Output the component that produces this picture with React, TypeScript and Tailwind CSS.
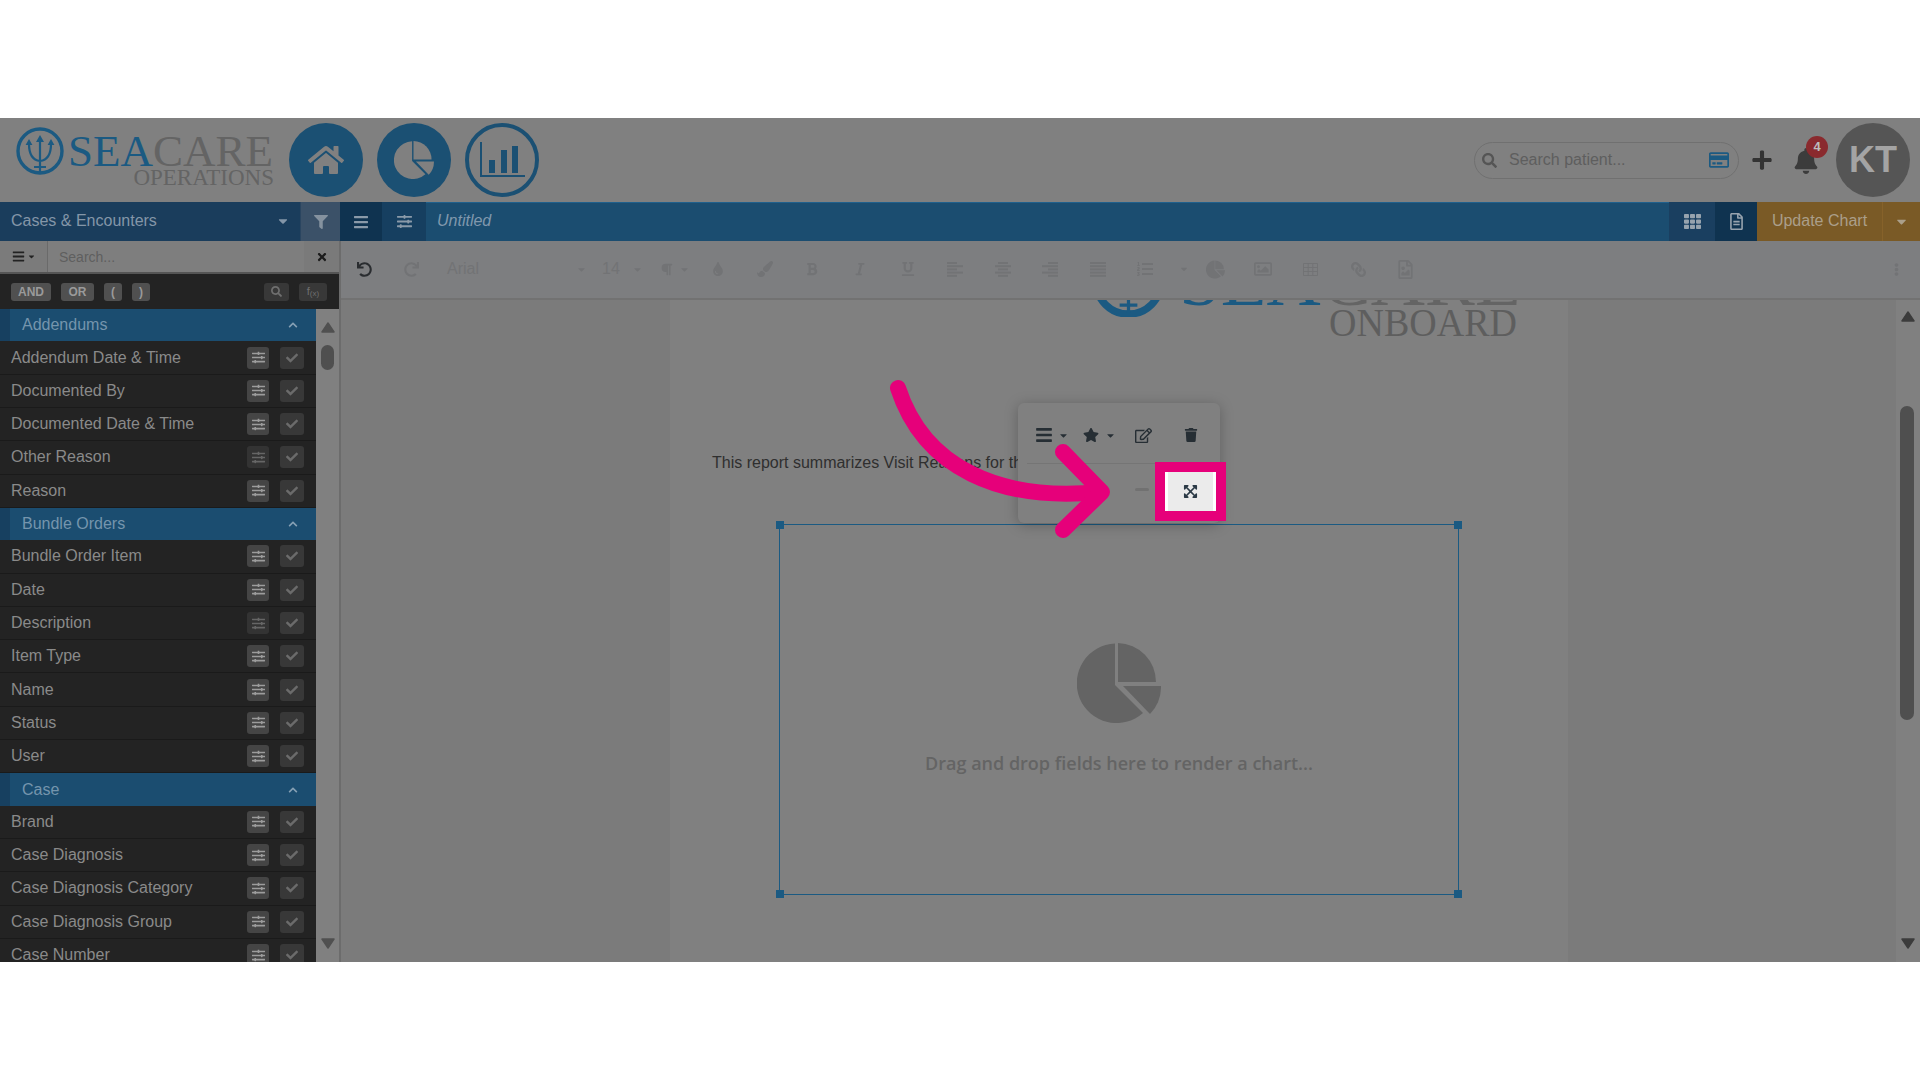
import type { ReactNode } from 'react'
import {
  FaBars,
  FaBell,
  FaBold,
  FaCaretDown,
  FaCheck,
  FaChevronUp,
  FaEllipsisV,
  FaExpandArrowsAlt,
  FaFilter,
  FaHome,
  FaItalic,
  FaLink,
  FaListOl,
  FaPaintBrush,
  FaParagraph,
  FaPlus,
  FaRedo,
  FaRegCreditCard,
  FaRegEdit,
  FaRegFileAlt,
  FaRegFileImage,
  FaRegImage,
  FaSearch,
  FaSlidersH,
  FaStar,
  FaTh,
  FaTimes,
  FaTint,
  FaTrash,
  FaUnderline,
  FaUndo,
} from 'react-icons/fa'

const sections = [
  {
    title: 'Addendums',
    rows: ['Addendum Date & Time', 'Documented By', 'Documented Date & Time', 'Other Reason', 'Reason'],
  },
  {
    title: 'Bundle Orders',
    rows: ['Bundle Order Item', 'Date', 'Description', 'Item Type', 'Name', 'Status', 'User'],
  },
  {
    title: 'Case',
    rows: ['Brand', 'Case Diagnosis', 'Case Diagnosis Category', 'Case Diagnosis Group', 'Case Number'],
  },
]

function Trident({ className, ring = 3.4 }: { className?: string; ring?: number }) {
  return (
    <svg viewBox="0 0 48 48" className={className} fill="none" stroke="#1b5a82">
      <circle cx="24" cy="24" r="22" strokeWidth={ring} />
      <path d="M24 12V45M13 17c0 10 3 16 11 17M35 17c0 10-3 16-11 17M18 40h12" strokeWidth="2.2" />
      <path d="M24 8l-4 7h8zM13 12l-3.4 6h6.8zM35 12l-3.4 6h6.8z" fill="#1b5a82" strokeWidth="0" />
    </svg>
  )
}

function PieShape({ className }: { className?: string }) {
  return (
    <svg viewBox="0 0 84 80" className={className} fill="currentColor">
      <path d="M38 0.5V42L66 70A39.8 39.8 0 1 1 38 0.5z" />
      <path d="M41 0a39 39 0 0 1 38 39H41z" />
      <path d="M46 43h38a39 39 0 0 1-11 28z" />
    </svg>
  )
}

function AlignIcon({ type }: { type: 'left' | 'center' | 'right' | 'justify' }) {
  const short = 10
  const x = type === 'left' || type === 'justify' ? 0 : type === 'center' ? 3 : 6
  const w = type === 'justify' ? 16 : short
  return (
    <svg viewBox="0 0 16 15" className="w-[16px] h-[15px]" fill="currentColor">
      <rect x={x} y="0" width={w} height="2" />
      <rect x="0" y="3.2" width="16" height="2" />
      <rect x={x} y="6.4" width={w} height="2" />
      <rect x="0" y="9.6" width="16" height="2" />
      <rect x={x} y="12.8" width={w} height="2" />
    </svg>
  )
}

function ScrollArrow({ down, className }: { down?: boolean; className: string }) {
  return (
    <svg viewBox="0 0 14 11" className={`w-[14px] h-[11px] shrink-0 ${className}`} fill="currentColor">
      <path
        d={down ? 'M1 1h12L7 10z' : 'M7 1l6 9H1z'}
        stroke="currentColor"
        strokeWidth="1.5"
        strokeLinejoin="round"
      />
    </svg>
  )
}

function Logo() {
  return (
    <div className="flex ml-4 w-[262px] shrink-0 self-start">
      <Trident className="w-12 h-12 mt-[9px] shrink-0" />
      <div className="ml-1 font-['Liberation_Serif',serif] text-[#646464] leading-none w-[206px]">
        <div className="text-[45px] mt-[11px] whitespace-nowrap">
          <span className="text-[#1b5a82]">SEA</span>CARE
        </div>
        <div className="text-[23px] text-right -mt-[8px] whitespace-nowrap">OPERATIONS</div>
      </div>
    </div>
  )
}

function Header() {
  return (
    <header className="h-[84px] shrink-0 bg-[#808080] flex items-center">
      <Logo />
      <div className="flex items-center ml-[11px] gap-[14px]">
        <div className="w-[74px] h-[74px] rounded-full bg-[#1b5073] flex items-center justify-center">
          <FaHome className="text-[#808080] text-[36px]" />
        </div>
        <div className="w-[74px] h-[74px] rounded-full bg-[#1b5073] flex items-center justify-center text-[#808080]">
          <PieShape className="w-[40px] h-[38px]" />
        </div>
        <div className="w-[74px] h-[74px] rounded-full border-[4px] border-[#1b5073] flex items-center justify-center">
          <svg viewBox="0 0 45 36" className="w-[45px] h-[36px] text-[#1b5073]" fill="currentColor">
            <path d="M2 0v33h43v2H0V0z" />
            <rect x="9" y="18" width="6" height="13" />
            <rect x="21" y="8" width="6" height="23" />
            <rect x="32" y="4" width="6" height="27" />
          </svg>
        </div>
      </div>

      <div className="ml-auto flex items-center">
        <div className="w-[265px] h-[37px] rounded-full border border-[#707070] flex items-center pl-[7px] pr-[9px]">
          <FaSearch className="text-[#555] text-[15px]" />
          <span className="ml-[12px] text-[16px] text-[#5e5e5e]">Search patient...</span>
          <FaRegCreditCard className="ml-auto text-[#1b5a82] text-[20px]" />
        </div>
        <FaPlus className="ml-[12px] text-[#333] text-[22px]" />
        <div className="relative ml-[20px] mr-[17px] mt-[1px]">
          <FaBell className="text-[#3c3c3c] text-[26px]" />
          <span className="absolute -top-[12px] left-[13px] w-[22px] h-[22px] rounded-full bg-[#8a2a2e] text-[#bdbdbd] text-[13px] font-bold flex items-center justify-center">
            4
          </span>
        </div>
        <div className="w-[74px] h-[74px] rounded-full bg-[#555555] text-[#a4a4a4] text-[36px] font-bold flex items-center justify-center mr-[10px]">
          KT
        </div>
      </div>
    </header>
  )
}

function BlueBar() {
  return (
    <div className="h-[39px] shrink-0 bg-[#1b4d70] shadow-[inset_0_1px_0_#20608c] flex items-stretch text-[16px]">
      <div className="w-[300px] bg-[#1a3d5c] flex items-center pl-[11px] pr-[10px] pb-[1px] text-[#8496a8]">
        <span>Cases &amp; Encounters</span>
        <FaCaretDown className="ml-auto text-[#8496a8] text-[14px]" />
      </div>
      <div className="w-[40px] bg-[#3b5168] flex items-center justify-center border-l border-[#2a4560]">
        <FaFilter className="text-[#85929f] text-[14px]" />
      </div>
      <div className="w-[42px] bg-[#0f3350] flex items-center justify-center">
        <FaBars className="text-[#8a9aa9] text-[16px]" />
      </div>
      <div className="w-[44px] bg-[#163f60] flex items-center justify-center">
        <FaSlidersH className="text-[#8a9aa9] text-[15px]" />
      </div>
      <div className="flex items-center ml-[11px] pb-[1px] italic text-[#8098ad]">Untitled</div>
      <div className="ml-auto w-[46px] bg-[#1a3f60] flex items-center justify-center">
        <FaTh className="text-[#97a3ae] text-[17px]" />
      </div>
      <div className="w-[42px] bg-[#0f3350] flex items-center justify-center">
        <FaRegFileAlt className="text-[#97a3ae] text-[17px]" />
      </div>
      <div className="w-[125px] bg-[#7a5a26] flex items-center justify-center pb-[1px] text-[#ab9f8a]">Update Chart</div>
      <div className="w-[38px] bg-[#7a5a26] border-l border-[#86622a] flex items-center justify-center">
        <FaCaretDown className="text-[#ab9f8a] text-[15px]" />
      </div>
    </div>
  )
}

function Pill({ children, className }: { children: ReactNode; className: string }) {
  return (
    <div className={`h-[18px] rounded-[3px] bg-[#505050] text-[#9a9a9a] text-[12px] font-bold flex items-center justify-center ${className}`}>
      {children}
    </div>
  )
}

function Row({ label, faint }: { label: string; faint?: boolean }) {
  return (
    <div className="h-[33.3px] shrink-0 bg-[#232323] border-b border-[#1a1a1a] flex items-center pl-[11px] text-[16px] text-[#8a8a8a]">
      <span>{label}</span>
      <div className={`ml-auto w-[22px] h-[22px] rounded-[3px] flex items-center justify-center ${faint ? 'bg-[#333333]' : 'bg-[#454545]'}`}>
        <FaSlidersH className={`text-[13px] ${faint ? 'text-[#666]' : 'text-[#9c9c9c]'}`} />
      </div>
      <div className="ml-[11px] mr-[12px] w-[24px] h-[22px] rounded-[3px] bg-[#383838] flex items-center justify-center">
        <FaCheck className="text-[#6b6b6b] text-[12px]" />
      </div>
    </div>
  )
}

function Sidebar() {
  return (
    <aside className="w-[341px] shrink-0 flex flex-col border-r-2 border-[#6c6c6c] min-h-0">
      <div className="h-[33px] shrink-0 bg-[#7e7e7e] border-b-2 border-[#555] flex items-stretch">
        <div className="w-[48px] border-r border-[#6a6a6a] bg-[#7b7b7b] flex items-center justify-center gap-[2px] text-[#222]">
          <FaBars className="text-[13px]" />
          <FaCaretDown className="text-[9px]" />
        </div>
        <div className="flex-1 flex items-center pl-[11px] pt-[1px] text-[14px] text-[#5f5f5f]">Search...</div>
        <div className="w-[35px] bg-[#7a7a7a] flex items-center justify-center">
          <FaTimes className="text-[#1c1c1c] text-[12px]" />
        </div>
      </div>
      <div className="h-[35px] shrink-0 bg-[#232323] flex items-center pl-[11px]">
        <Pill className="w-[40px]">AND</Pill>
        <Pill className="w-[33px] ml-[10px]">OR</Pill>
        <Pill className="w-[18px] ml-[10px]">(</Pill>
        <Pill className="w-[18px] ml-[10px]">)</Pill>
        <div className="ml-auto w-[25px] h-[18px] rounded-[3px] bg-[#383838] flex items-center justify-center">
          <FaSearch className="text-[#6f6f6f] text-[11px]" />
        </div>
        <div className="ml-[10px] mr-[12px] w-[28px] h-[18px] rounded-[3px] bg-[#383838] flex items-center justify-center text-[#6f6f6f] text-[11px]">
          <span>f</span>
          <span className="text-[8px] mt-[4px]">(x)</span>
        </div>
      </div>
      <div className="flex-1 flex min-h-0">
        <div className="w-[316px] shrink-0 overflow-hidden flex flex-col">
          {sections.map((section) => (
            <div key={section.title} className="flex flex-col shrink-0">
              <div className="h-[32.4px] shrink-0 bg-[#1b4d70] border-l-[10px] border-[#174060] flex items-center pl-[12px] pr-[18px] text-[16px] text-[#7595ad]">
                <span>{section.title}</span>
                <FaChevronUp className="ml-auto text-[#86a0b4] text-[10px]" />
              </div>
              {section.rows.map((row) => (
                <Row key={row} label={row} faint={row === 'Other Reason' || row === 'Description'} />
              ))}
            </div>
          ))}
        </div>
        <div className="flex-1 bg-[#808080] flex flex-col items-center pt-[13px] pb-[13px]">
          <ScrollArrow className="text-[#505050]" />
          <div className="w-[13px] h-[25px] rounded-full bg-[#4f4f4f] mt-[12px]" />
          <ScrollArrow down className="mt-auto text-[#505050]" />
        </div>
      </div>
    </aside>
  )
}

function Tool({ children, width = 'w-[47.6px]' }: { children: ReactNode; width?: string }) {
  return <div className={`${width} shrink-0 flex items-center justify-center`}>{children}</div>
}

function Toolbar() {
  return (
    <div className="relative z-10 h-[59px] shrink-0 bg-[#7d7e80] border-b-2 border-[#727272] pb-[1px] flex items-stretch text-[16px] text-[#727375]">
      <Tool width="w-[47px]"><FaUndo className="text-[#2a2d30] text-[15px]" /></Tool>
      <Tool width="w-[47px]"><FaRedo className="text-[15px]" /></Tool>
      <div className="w-[160px] shrink-0 flex items-center pl-[12px] pr-[8px]">
        <span>Arial</span>
        <FaCaretDown className="ml-auto text-[11px]" />
      </div>
      <div className="w-[55px] shrink-0 flex items-center pl-[7px] pr-[7px]">
        <span>14</span>
        <FaCaretDown className="ml-auto text-[11px]" />
      </div>
      <div className="w-[45px] shrink-0 flex items-center pl-[10px] gap-[6px]">
        <FaParagraph className="text-[13px]" />
        <FaCaretDown className="text-[11px]" />
      </div>
      <Tool width="w-[46px]"><FaTint className="text-[14px]" /></Tool>
      <Tool><FaPaintBrush className="text-[16px]" /></Tool>
      <Tool><FaBold className="text-[14px]" /></Tool>
      <Tool><FaItalic className="text-[14px]" /></Tool>
      <Tool><FaUnderline className="text-[14px]" /></Tool>
      <Tool><AlignIcon type="left" /></Tool>
      <Tool><AlignIcon type="center" /></Tool>
      <Tool><AlignIcon type="right" /></Tool>
      <Tool><AlignIcon type="justify" /></Tool>
      <div className="w-[70px] shrink-0 flex items-center pl-[15px]">
        <FaListOl className="text-[16px]" />
        <FaCaretDown className="ml-auto mr-[3px] text-[10px]" />
      </div>
      <Tool><PieShape className="w-[19px] h-[19px]" /></Tool>
      <Tool><FaRegImage className="text-[18px]" /></Tool>
      <Tool>
        <svg viewBox="0 0 15 13" className="w-[15px] h-[13px]" fill="none" stroke="currentColor">
          <path d="M.5.5h14v12H.5zM.5 4.5h14M.5 8.5h14M5.2.5v12M9.8.5v12" />
        </svg>
      </Tool>
      <Tool><FaLink className="text-[15px] -scale-x-100" /></Tool>
      <Tool><FaRegFileImage className="text-[19px]" /></Tool>
      <div className="ml-auto w-[48px] flex items-center justify-center">
        <FaEllipsisV className="text-[13px]" />
      </div>
    </div>
  )
}

function Handle({ className }: { className: string }) {
  return <span className={`absolute w-[8px] h-[8px] bg-[#1b5a82] ${className}`} />
}

function ReportPage() {
  return (
    <div className="w-[898px] shrink-0 ml-[329px] bg-[#808080] overflow-hidden">
      {/* the logo sits scrolled up behind the toolbar */}
      <div className="h-[103px] -mt-[62px] mr-[51px] flex justify-end items-start font-['Liberation_Serif',serif] leading-none">
        <Trident className="w-[71px] h-[71px] mt-[8px] mr-[15px]" ring={5} />
        <div className="w-[338px] mt-[4px] text-right whitespace-nowrap">
          <div className="text-[75px] text-[#646464]">
            <span className="text-[#1b5a82]">SEA</span>CARE
          </div>
          <div className="text-[40px] text-[#5e5e5e] scale-x-[0.95] origin-right -mt-[14px]">ONBOARD</div>
        </div>
      </div>
      <p className="mt-[110px] ml-[42px] text-[16px] leading-[24px] text-[#2f2f2f] whitespace-nowrap">
        This report summarizes Visit Reasons for the selected period.
      </p>
      <div className="relative mt-[49px] ml-[109px] w-[680px] h-[371px] border border-[#1b5a82] flex flex-col items-center">
        <Handle className="-left-[4px] -top-[4px]" />
        <Handle className="-right-[4px] -top-[4px]" />
        <Handle className="-left-[4px] -bottom-[4px]" />
        <Handle className="-right-[4px] -bottom-[4px]" />
        <PieShape className="w-[84px] h-[80px] mt-[118px] text-[#646464]" />
        <div className="mt-[27px] font-['Open_Sans',sans-serif] font-semibold text-[18px] text-[#646464] whitespace-nowrap">
          Drag and drop fields here to render a chart...
        </div>
      </div>
    </div>
  )
}

function ChartPopup() {
  return (
    <div className="absolute left-[677px] top-[103px] w-[202px] h-[120px] rounded-[6px] bg-[#808080] shadow-[0_2px_14px_rgba(0,0,0,0.25)] z-20">
      <div className="h-[61px] pt-[4px] mx-[9px] border-b border-[#757575] flex items-center text-[#262e34]">
        <FaBars className="ml-[8px] text-[18px]" />
        <FaCaretDown className="ml-[5px] text-[11px]" />
        <FaStar className="ml-[14px] text-[16px]" />
        <FaCaretDown className="ml-[6px] text-[11px]" />
        <FaRegEdit className="ml-[19px] text-[17px]" />
        <FaTrash className="ml-[32px] text-[14px]" />
      </div>
      <div className="absolute left-[117px] top-[85px] w-[14px] h-[3px] rounded bg-[#717171]" />
      <div className="absolute left-[137px] top-[59px] w-[71px] h-[59px] border-[10px] border-[#e6007a] bg-[#ebebeb]">
        <div className="h-full border-x-[3px] border-white flex items-center justify-center">
          <FaExpandArrowsAlt className="text-[#2b3a46] text-[15px]" />
        </div>
      </div>
    </div>
  )
}

function PointerArrow() {
  return (
    <svg className="absolute left-0 top-0 z-30 pointer-events-none" width="1580" height="662" viewBox="0 0 1580 662" fill="none">
      <g stroke="#e6007a" strokeWidth="16" strokeLinecap="round" strokeLinejoin="round" transform="translate(-341 -300)">
        <path d="M898 388C924 468 1000 502 1100 492" />
        <path d="M1063 452L1102 492L1063 530" />
      </g>
    </svg>
  )
}

function Workspace() {
  return (
    <main className="flex-1 min-w-0 flex flex-col">
      <Toolbar />
      <div className="relative flex-1 min-h-0 bg-[#7b7b7b] flex overflow-hidden">
        <ReportPage />
        <ChartPopup />
        <PointerArrow />
        <div className="ml-auto w-[24px] bg-[#808080] flex flex-col items-center pt-[11px] pb-[13px] relative">
          <ScrollArrow className="text-[#3c3c3c]" />
          <div className="absolute left-[4px] top-[106px] w-[14px] h-[314px] rounded-full bg-[#4f4f4f]" />
          <ScrollArrow down className="mt-auto text-[#3c3c3c]" />
        </div>
      </div>
    </main>
  )
}

export default function App() {
  return (
    <div className="w-[1920px] h-[1080px] bg-white overflow-hidden font-['Liberation_Sans',Arial,sans-serif] flex flex-col">
      <div className="h-[118px] shrink-0" />
      <div className="h-[844px] shrink-0 flex flex-col">
        <Header />
        <BlueBar />
        <div className="flex-1 flex min-h-0">
          <Sidebar />
          <Workspace />
        </div>
      </div>
    </div>
  )
}
